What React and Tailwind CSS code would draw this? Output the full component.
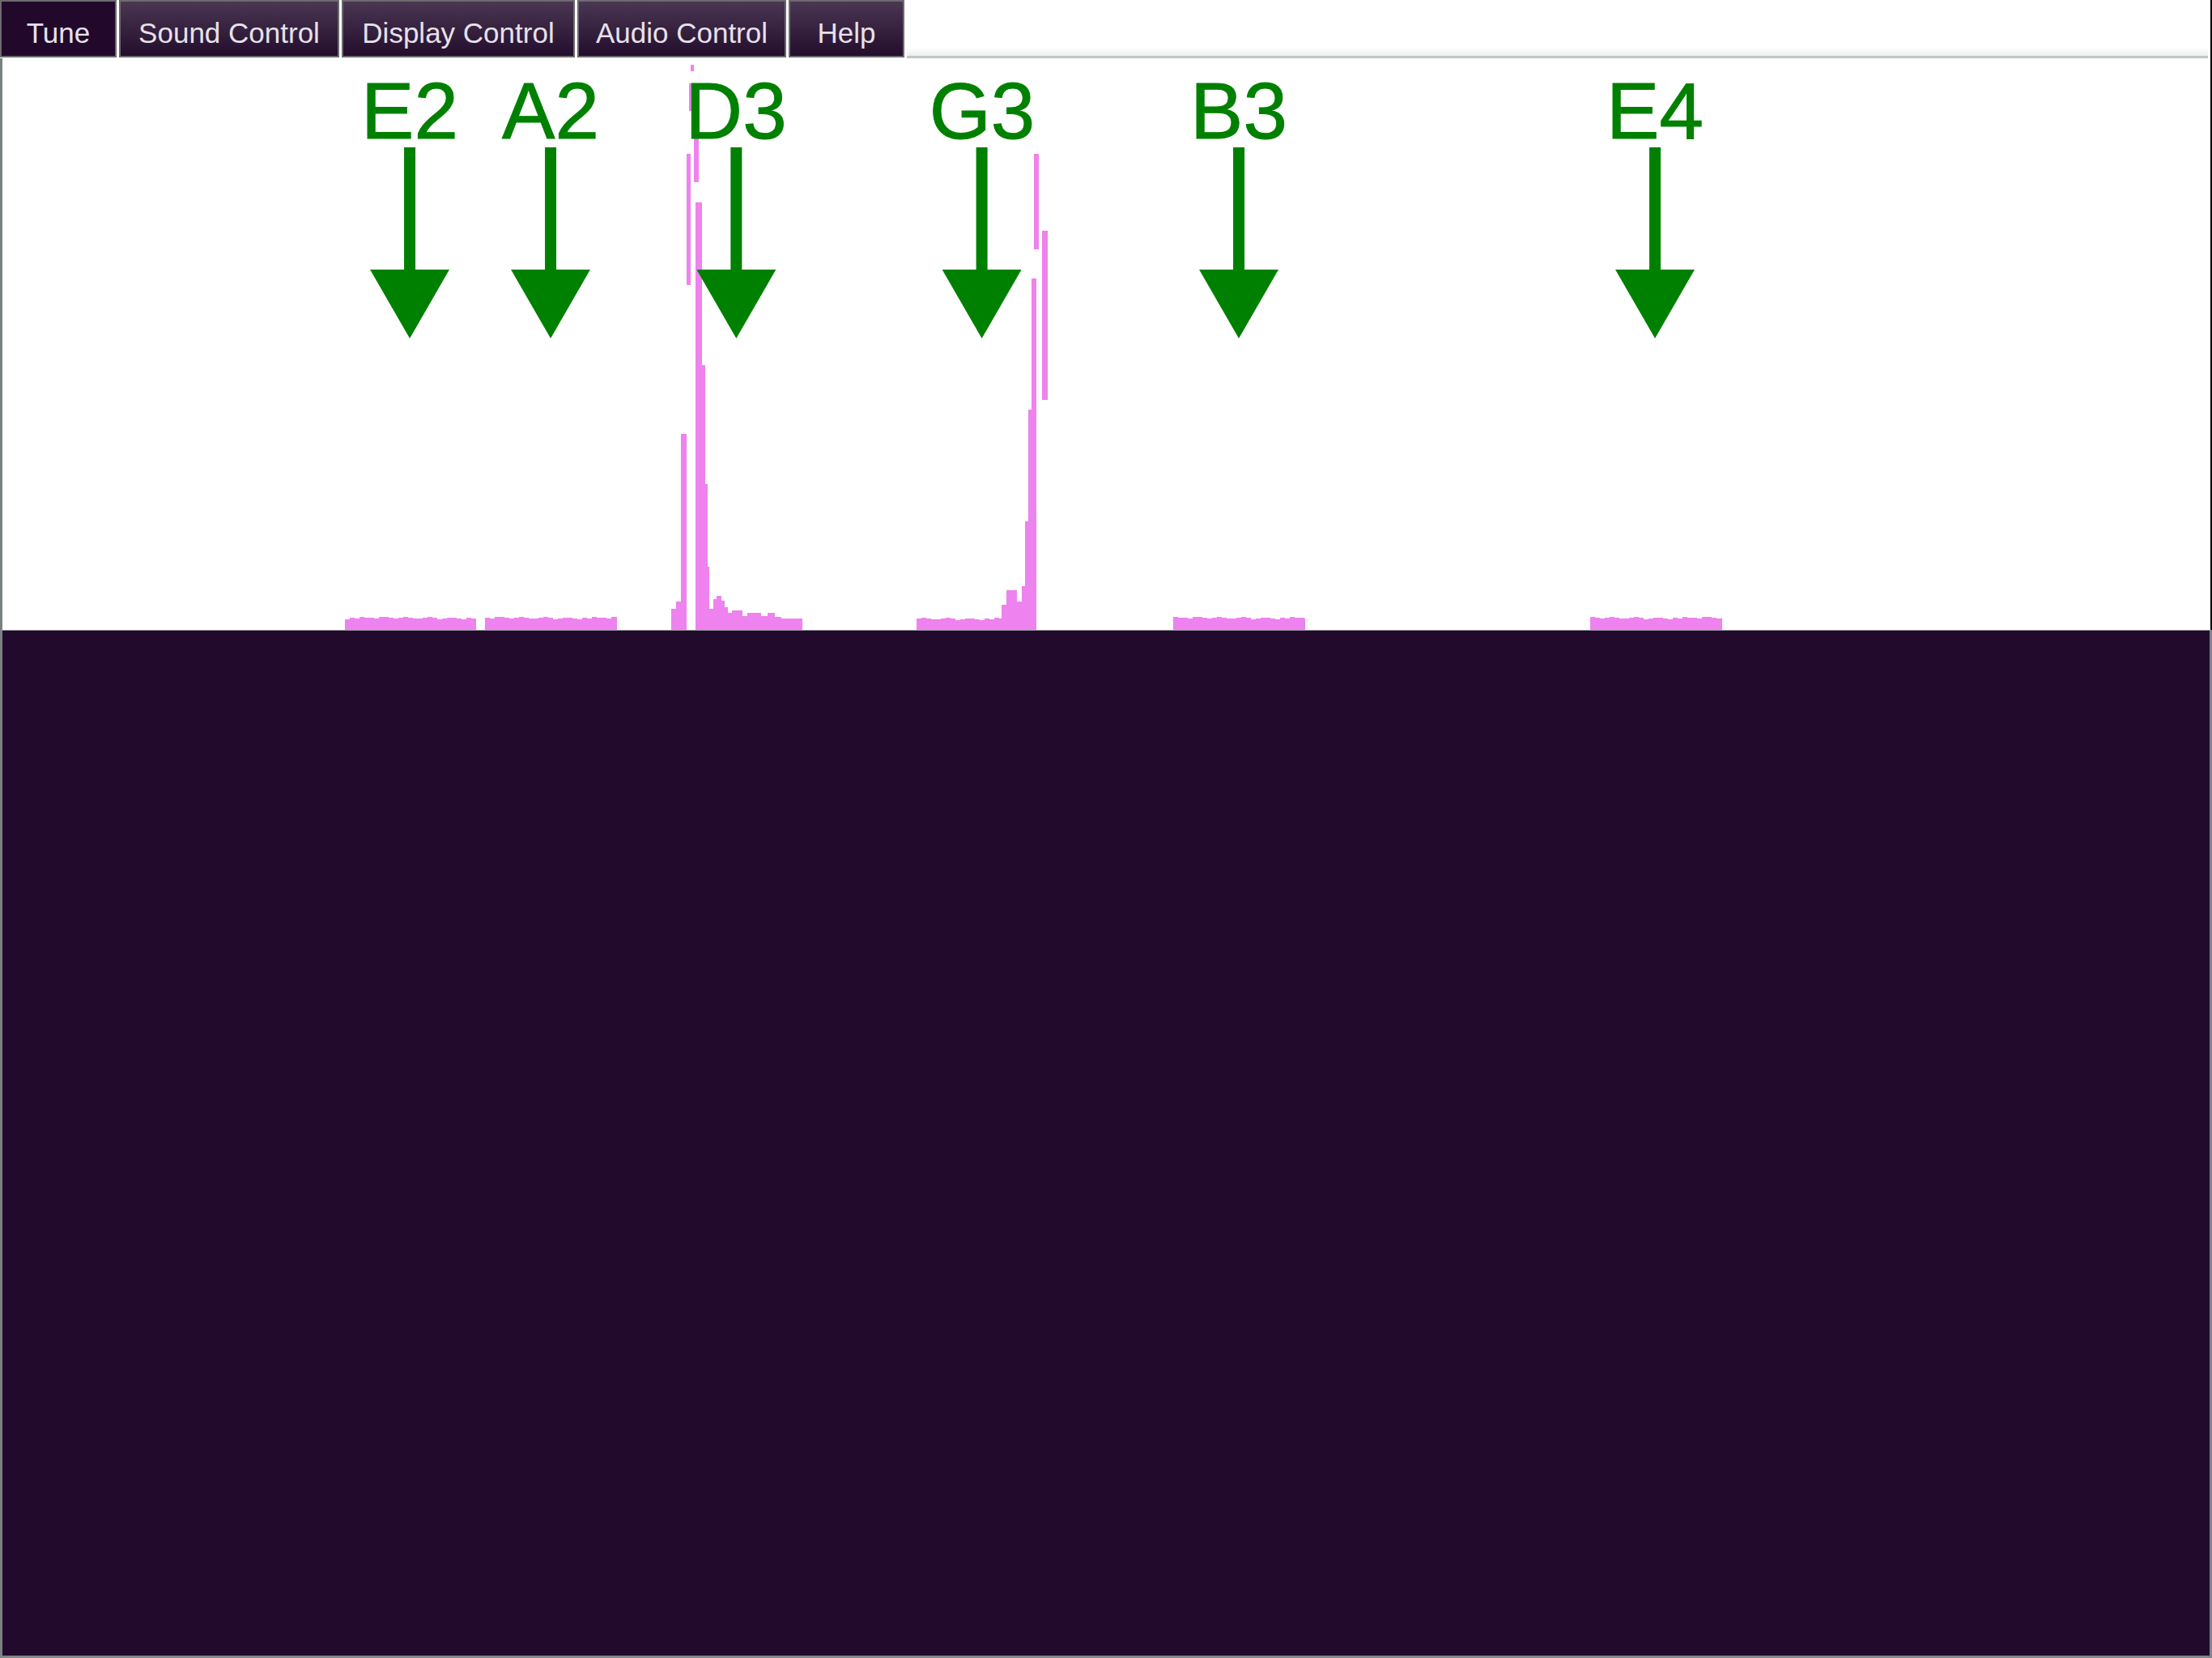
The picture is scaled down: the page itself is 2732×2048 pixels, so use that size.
import React from "react";

const TABS = [
  { label: "Tune", width: "w-[144px]", active: true },
  { label: "Sound Control", width: "w-[272px]" },
  { label: "Display Control", width: "w-[288px]" },
  { label: "Audio Control", width: "w-[258px]" },
  { label: "Help", width: "w-[143px]" },
];

// note markers, left is the note x in page pixels minus the 3px border
const NOTES = [
  { name: "E2", pos: "left-[503px]" },
  { name: "A2", pos: "left-[677px]" },
  { name: "D3", pos: "left-[906px]" },
  { name: "G3", pos: "left-[1210px]" },
  { name: "B3", pos: "left-[1527px]" },
  { name: "E4", pos: "left-[2041px]" },
];

const BUMP = [1, 3, 2, 4, 3, 3, 2, 4, 4, 3, 2, 3, 4, 3, 2, 2, 3, 4, 3, 1, 2, 3, 3, 2];

// low flat bands around each string, drawn as a little step path
const bandPath = (x0, x1, seed, base = 766) => {
  let d = `M${x0} 778`;
  let i = seed;
  for (let x = x0; x < x1; x += 6) {
    const top = base - BUMP[i % BUMP.length];
    const end = Math.min(x + 6, x1);
    d += ` L${x} ${top} L${end} ${top}`;
    i += 1;
  }
  return d + ` L${x1} 778 Z`;
};

// peaks (x0, x1, top, bottom)
const PEAKS = [
  [829, 835, 752, 778],
  [835, 841, 743, 778],
  [841, 848, 536, 778],
  [848, 853, 190, 352],
  [851, 855, 103, 137],
  [853, 857, 80, 88],
  [857, 863, 170, 225],
  [859, 867, 250, 778],
  [866, 871, 451, 778],
  [870, 874, 598, 778],
  [873, 876, 700, 778],
  [876, 881, 752, 778],
  [881, 885, 740, 778],
  [885, 891, 736, 778],
  [891, 895, 742, 778],
  [895, 899, 750, 778],
  [899, 904, 757, 778],
  [904, 917, 754, 778],
  [917, 923, 761, 778],
  [923, 940, 757, 778],
  [940, 948, 761, 778],
  [948, 957, 757, 778],
  [957, 965, 762, 778],
  [965, 991, 764, 778],
  [1237, 1243, 747, 778],
  [1243, 1256, 729, 778],
  [1256, 1262, 743, 778],
  [1262, 1266, 724, 778],
  [1266, 1270, 644, 778],
  [1270, 1274, 506, 778],
  [1274, 1280, 344, 778],
  [1277, 1283, 190, 308],
  [1287, 1294, 285, 494],
];

const BANDS = [
  [426, 588, 0],
  [599, 762, 5],
  [1132, 1237, 11, 767],
  [1449, 1612, 3],
  [1964, 2127, 8],
];

const Spectrum = () => (
  <svg
    className="absolute inset-0"
    width="2727"
    height="706"
    viewBox="3 72 2727 706"
  >
    {BANDS.map(([x0, x1, seed, base]) => (
      <path key={x0} d={bandPath(x0, x1, seed, base)} fill="#ee82ee" />
    ))}
    {PEAKS.map(([x0, x1, top, bottom], idx) => (
      <rect
        key={idx}
        x={x0}
        y={top}
        width={x1 - x0}
        height={bottom - top}
        fill="#ee82ee"
      />
    ))}
  </svg>
);

const NoteMarker = ({ name, pos }) => (
  <div
    className={`absolute top-[20px] ${pos} -translate-x-1/2 flex flex-col items-center`}
  >
    <span className="text-[98px] leading-[90px] text-[#008000] [-webkit-text-stroke:1px_#008000]">
      {name}
    </span>
    <svg width="98" height="236" viewBox="0 0 98 236">
      <rect x="42" y="0" width="14" height="153" fill="#008000" />
      <polygon points="0,151 98,151 49,236" fill="#008000" />
    </svg>
  </div>
);

export default function App() {
  return (
    <div className="w-[2732px] h-[2048px] flex flex-col bg-white font-['Liberation_Sans',Arial,sans-serif] overflow-hidden">
      <div className="flex h-[72px] gap-[3px]">
        {TABS.map((tab) => (
          <div
            key={tab.label}
            className={`${tab.width} h-[71px] border-2 border-[#6d6a70] pt-[19px] text-center text-[35px] leading-[40px] text-[#e6e1ea] ${
              tab.active
                ? "bg-[#22092c]"
                : "bg-linear-to-b from-[#4a3752] to-[#240d2d]"
            }`}
          >
            {tab.label}
          </div>
        ))}
        <div className="flex-1 h-[72px] border-b-[3px] border-[#c1c6c6] bg-linear-to-b from-white from-[85%] to-[#eceeee]" />
        <div className="w-[2px] h-[72px] bg-black" />
      </div>

      <div className="flex h-[706px]">
        <div className="w-[3px] bg-[#7a8183]" />
        <div className="relative flex-1">
          <Spectrum />
          {NOTES.map((note) => (
            <NoteMarker key={note.name} {...note} />
          ))}
        </div>
        <div className="w-[2px] bg-black" />
      </div>

      <div className="flex-1 bg-[#220a2d] border-t border-t-[#9a99a0] border-l-[3px] border-r-[3px] border-b-[3px] border-l-[#7a8183] border-r-[#7f8789] border-b-[#7f8789]" />
    </div>
  );
}
